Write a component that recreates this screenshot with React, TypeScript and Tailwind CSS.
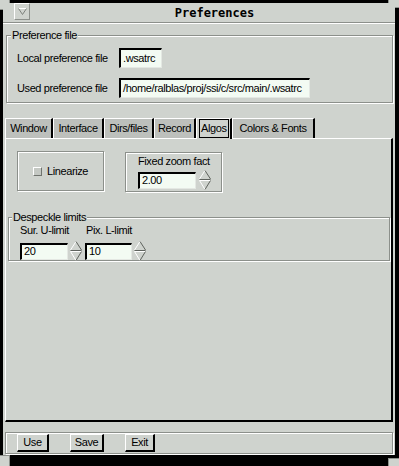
import React from 'react';

// engraved frame: dark line with a white line inside (top/left) and outside (bottom/right)
const engraved = 'border border-[#8c908b] shadow-[inset_1px_1px_0_#ffffff,1px_1px_0_#ffffff]';

const Spinner: React.FC = () => (
  <svg width="12" height="20" viewBox="0 0 12 20" className="block">
    <line x1="0.5" y1="9" x2="6" y2="0.5" stroke="#ffffff" />
    <line x1="6" y1="0.5" x2="11.5" y2="9" stroke="#5f635e" />
    <line x1="0.5" y1="9.5" x2="11.5" y2="9.5" stroke="#5f635e" />
    <line x1="0.5" y1="10.5" x2="11.5" y2="10.5" stroke="#ffffff" />
    <line x1="0.5" y1="10.5" x2="6" y2="19.5" stroke="#ffffff" />
    <line x1="11.5" y1="10.5" x2="6" y2="19.5" stroke="#5f635e" />
  </svg>
);

const Field: React.FC<{ value: string; className: string }> = ({ value, className }) => (
  <div
    className={`flex items-center border-t-2 border-l-2 border-black border-r border-b border-r-[#e4e8e3] border-b-[#e4e8e3] bg-[#f3fbf3] pl-[2px] leading-none whitespace-nowrap overflow-hidden ${className}`}
  >
    {value}
  </div>
);

const Button: React.FC<{ label: string; width: string }> = ({ label, width }) => (
  <div
    className={`flex h-[18px] items-center justify-center border-t border-l border-white border-r-2 border-b-2 border-r-black border-b-black bg-[#cfd3ce] ${width}`}
  >
    {label}
  </div>
);

const tabs = [
  { label: 'Window', w: 'w-[48px]' },
  { label: 'Interface', w: 'w-[51px]' },
  { label: 'Dirs/files', w: 'w-[50px]' },
  { label: 'Record', w: 'w-[42px]' },
  { label: 'Algos', w: 'w-[36px]', active: true },
  { label: 'Colors & Fonts', w: 'w-[83px]' },
];

const App: React.FC = () => {
  return (
    <div className="relative h-[466px] w-[399px] overflow-hidden bg-black pt-[3px] pl-[3px] pr-[4px] pb-[11px]">
      {/* window manager resize corners */}
      <div className="absolute left-0 top-0 h-[10px] w-[10px] border-r border-b border-[#8c908b] bg-[#cfd3ce]" />
      <div className="absolute right-0 top-0 h-[8px] w-[11px] border-l border-b border-[#8c908b] bg-[#cfd3ce]" />
      <div className="absolute left-0 bottom-0 h-[11px] w-[10px] border-r border-t border-[#8c908b] bg-[#cfd3ce]" />
      <div className="absolute right-0 bottom-0 h-[8px] w-[11px] border-l border-t border-[#8c908b] bg-[#cfd3ce]" />

      <div className="relative flex h-full flex-col bg-[#cfd3ce] font-['Liberation_Sans',Arial,sans-serif] text-[11px] tracking-[-0.4px] text-black">
        {/* title bar */}
        <div className="flex h-[20px] shrink-0 items-stretch border-b border-[#8c908b] shadow-[0_1px_0_#ffffff]">
          <div className="ml-[11px] flex h-[17px] w-[16px] items-center justify-center border-t border-l border-white border-r border-b border-r-[#8c908b] border-b-[#8c908b]">
            <svg width="9" height="7" viewBox="0 0 9 7">
              <line x1="0.5" y1="0.5" x2="8.5" y2="0.5" stroke="#ffffff" />
              <line x1="0.5" y1="0.5" x2="4.5" y2="6.5" stroke="#7d817c" />
              <line x1="8.5" y1="0.5" x2="4.5" y2="6.5" stroke="#7d817c" />
            </svg>
          </div>
          <div className="flex-1 pl-[4px] pt-[2px] text-center font-['DejaVu_Sans_Mono',monospace] text-[12px] font-bold leading-[16px] tracking-normal">
            Preferences
          </div>
        </div>

        {/* preference file group */}
        <div className={`relative mt-[12px] ml-[3px] mr-[2px] h-[68px] shrink-0 ${engraved}`}>
          <span className="absolute left-[4px] top-[-7px] bg-[#cfd3ce] px-[1px] leading-[13px]">Preference file</span>
          <div className="grid grid-cols-[102px_1fr] items-center gap-y-[10px] pl-[10px] pt-[12px]">
            <span>Local preference file</span>
            <Field value=".wsatrc" className="h-[20px] w-[43px]" />
            <span>Used preference file</span>
            <Field value="/home/ralblas/proj/ssi/c/src/main/.wsatrc" className="h-[20px] w-[191px]" />
          </div>
        </div>

        {/* tabs */}
        <div className="mt-[15px] ml-[2px] flex h-[20px] shrink-0 items-stretch">
          {tabs.map((t) =>
            t.active ? (
              <div
                key={t.label}
                className={`relative z-10 -mb-px flex items-start border-l border-t border-white border-r-2 border-r-black bg-[#cfd3ce] pl-[2px] ${t.w}`}
              >
                <span className="flex h-[19px] items-center border border-black px-[1px]">{t.label}</span>
              </div>
            ) : (
              <div
                key={t.label}
                className={`flex items-center justify-center border-l border-t border-white border-r-2 border-r-black bg-[#bdc0bc] ${t.w}`}
              >
                {t.label}
              </div>
            )
          )}
        </div>

        {/* tab panel */}
        <div className="ml-[2px] mr-[2px] flex flex-1 flex-col border-l border-t border-white border-r-2 border-b-2 border-r-black border-b-black">
          <div className="ml-[11px] mt-[12px] flex items-start gap-[21px]">
            <div className={`flex h-[40px] w-[87px] items-center justify-center gap-[5px] ${engraved}`}>
              <span className="h-[9px] w-[9px] border-t border-l border-white border-r border-b border-r-[#6f736e] border-b-[#6f736e] bg-[#c4c8c3]" />
              <span>Linearize</span>
            </div>
            <div className={`mt-[1px] flex h-[40px] w-[97px] flex-col pl-[12px] pt-[2px] ${engraved}`}>
              <span className="leading-[13px]">Fixed zoom fact</span>
              <div className="mt-[2px] flex items-center gap-[3px]">
                <Field value="2.00" className="h-[17px] w-[58px]" />
                <Spinner />
              </div>
            </div>
          </div>

          {/* despeckle group */}
          <div className={`relative mt-[25px] ml-[2px] mr-[1px] h-[44px] ${engraved}`}>
            <span className="absolute left-[3px] top-[-7px] bg-[#cfd3ce] px-[1px] leading-[13px]">Despeckle limits</span>
            <div className="flex gap-[3px] pl-[11px] pt-[6px]">
              <div className="flex flex-col">
                <span className="leading-[13px]">Sur. U-limit</span>
                <div className="mt-[4px] flex items-center gap-[2px]">
                  <Field value="20" className="h-[17px] w-[48px]" />
                  <Spinner />
                </div>
              </div>
              <div className="flex flex-col">
                <span className="pl-[1px] leading-[13px]">Pix. L-limit</span>
                <div className="mt-[4px] flex items-center gap-[2px]">
                  <Field value="10" className="h-[17px] w-[47px]" />
                  <Spinner />
                </div>
              </div>
            </div>
          </div>
        </div>

        {/* buttons */}
        <div className={`mt-[10px] mb-[1px] ml-[2px] mr-[2px] flex h-[22px] shrink-0 items-start gap-[21px] pl-[11px] pt-px ${engraved}`}>
          <Button label="Use" width="w-[32px]" />
          <Button label="Save" width="w-[34px]" />
          <Button label="Exit" width="w-[30px]" />
        </div>
      </div>
    </div>
  );
};

export default App;
